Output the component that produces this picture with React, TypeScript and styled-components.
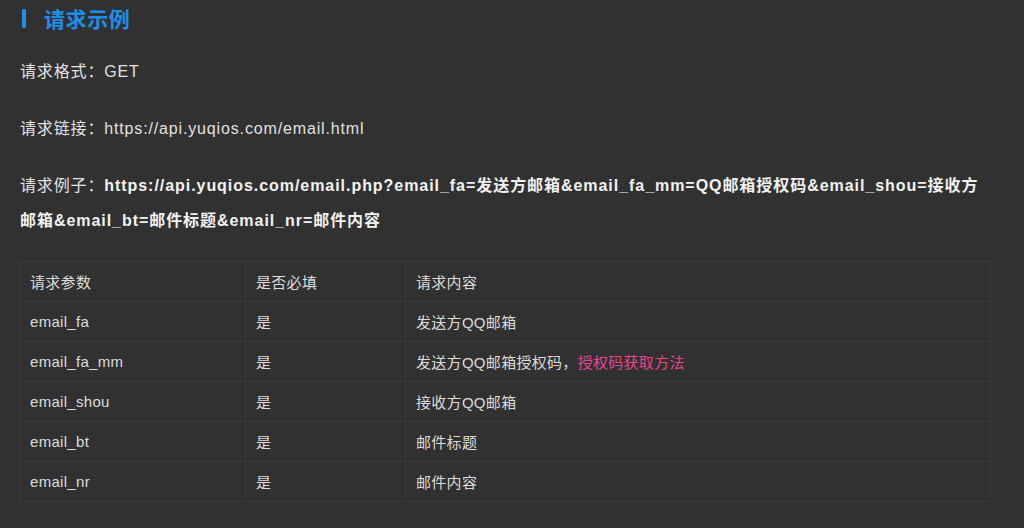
import styled, { createGlobalStyle } from 'styled-components'

const GlobalStyle = createGlobalStyle`
  html, body {
    margin: 0;
    padding: 0;
    background: #313131;
  }
  body {
    font-family: 'Liberation Sans', Arial, 'Noto Sans CJK SC', sans-serif;
    color: #e4e4e4;
  }
`

const Page = styled.div`
  width: 1024px;
  height: 528px;
  overflow: hidden;
  padding: 0 38px 0 20px;
  box-sizing: border-box;
`

const Heading = styled.h3`
  display: flex;
  align-items: center;
  gap: 18px;
  height: 36px;
  margin: 0 0 18px;
  padding-left: 2px;
  font-size: 21px;
  font-weight: 700;
  color: #1e8fe8;
  letter-spacing: 0.6px;

  &::before {
    content: '';
    width: 4px;
    height: 19px;
    border-radius: 1px;
    background: #1e8fe8;
  }
`

const Line = styled.p`
  margin: 0 0 22px;
  font-size: 16px;
  line-height: 35px;
  letter-spacing: 0.85px;
  color: #e2e2e2;
`

const Strong = styled.strong`
  font-weight: 700;
  letter-spacing: 0.95px;
  color: #f2f2f2;
`

const Table = styled.table`
  width: 972px;
  margin: 23px 0 0 -1px;
  border-collapse: collapse;
  font-size: 15px;
  letter-spacing: 0.3px;
  color: #dcdcdc;
`

const Cell = styled.td<{ width?: number }>`
  height: 40px;
  padding: 0 10px;
  border: 1px solid #3b3b3b;
  width: ${({ width }) => (width ? `${width}px` : 'auto')};
  box-sizing: border-box;
  vertical-align: middle;
`

const HeadCell = styled(Cell).attrs({ as: 'th' })`
  font-weight: 400;
  text-align: left;
`

const Link = styled.a`
  color: #e8458f;
  text-decoration: none;
`

const rows = [
  { name: 'email_fa', desc: '发送方QQ邮箱' },
  { name: 'email_fa_mm', desc: '发送方QQ邮箱授权码，', link: '授权码获取方法' },
  { name: 'email_shou', desc: '接收方QQ邮箱' },
  { name: 'email_bt', desc: '邮件标题' },
  { name: 'email_nr', desc: '邮件内容' },
]

export default function App() {
  return (
    <Page>
      <GlobalStyle />
      <Heading>请求示例</Heading>
      <Line>请求格式：GET</Line>
      <Line>请求链接：https://api.yuqios.com/email.html</Line>
      <Line>
        请求例子：
        <Strong>
          https://api.yuqios.com/email.php?email_fa=发送方邮箱&amp;email_fa_mm=QQ邮箱授权码&amp;email_shou=接收方邮箱&amp;email_bt=邮件标题&amp;email_nr=邮件内容
        </Strong>
      </Line>
      <Table>
        <thead>
          <tr>
            <HeadCell width={226}>请求参数</HeadCell>
            <HeadCell width={160}>是否必填</HeadCell>
            <HeadCell>请求内容</HeadCell>
          </tr>
        </thead>
        <tbody>
          {rows.map((row) => (
            <tr key={row.name}>
              <Cell>{row.name}</Cell>
              <Cell>是</Cell>
              <Cell>
                {row.desc}
                {row.link && <Link href="#">{row.link}</Link>}
              </Cell>
            </tr>
          ))}
        </tbody>
      </Table>
    </Page>
  )
}
